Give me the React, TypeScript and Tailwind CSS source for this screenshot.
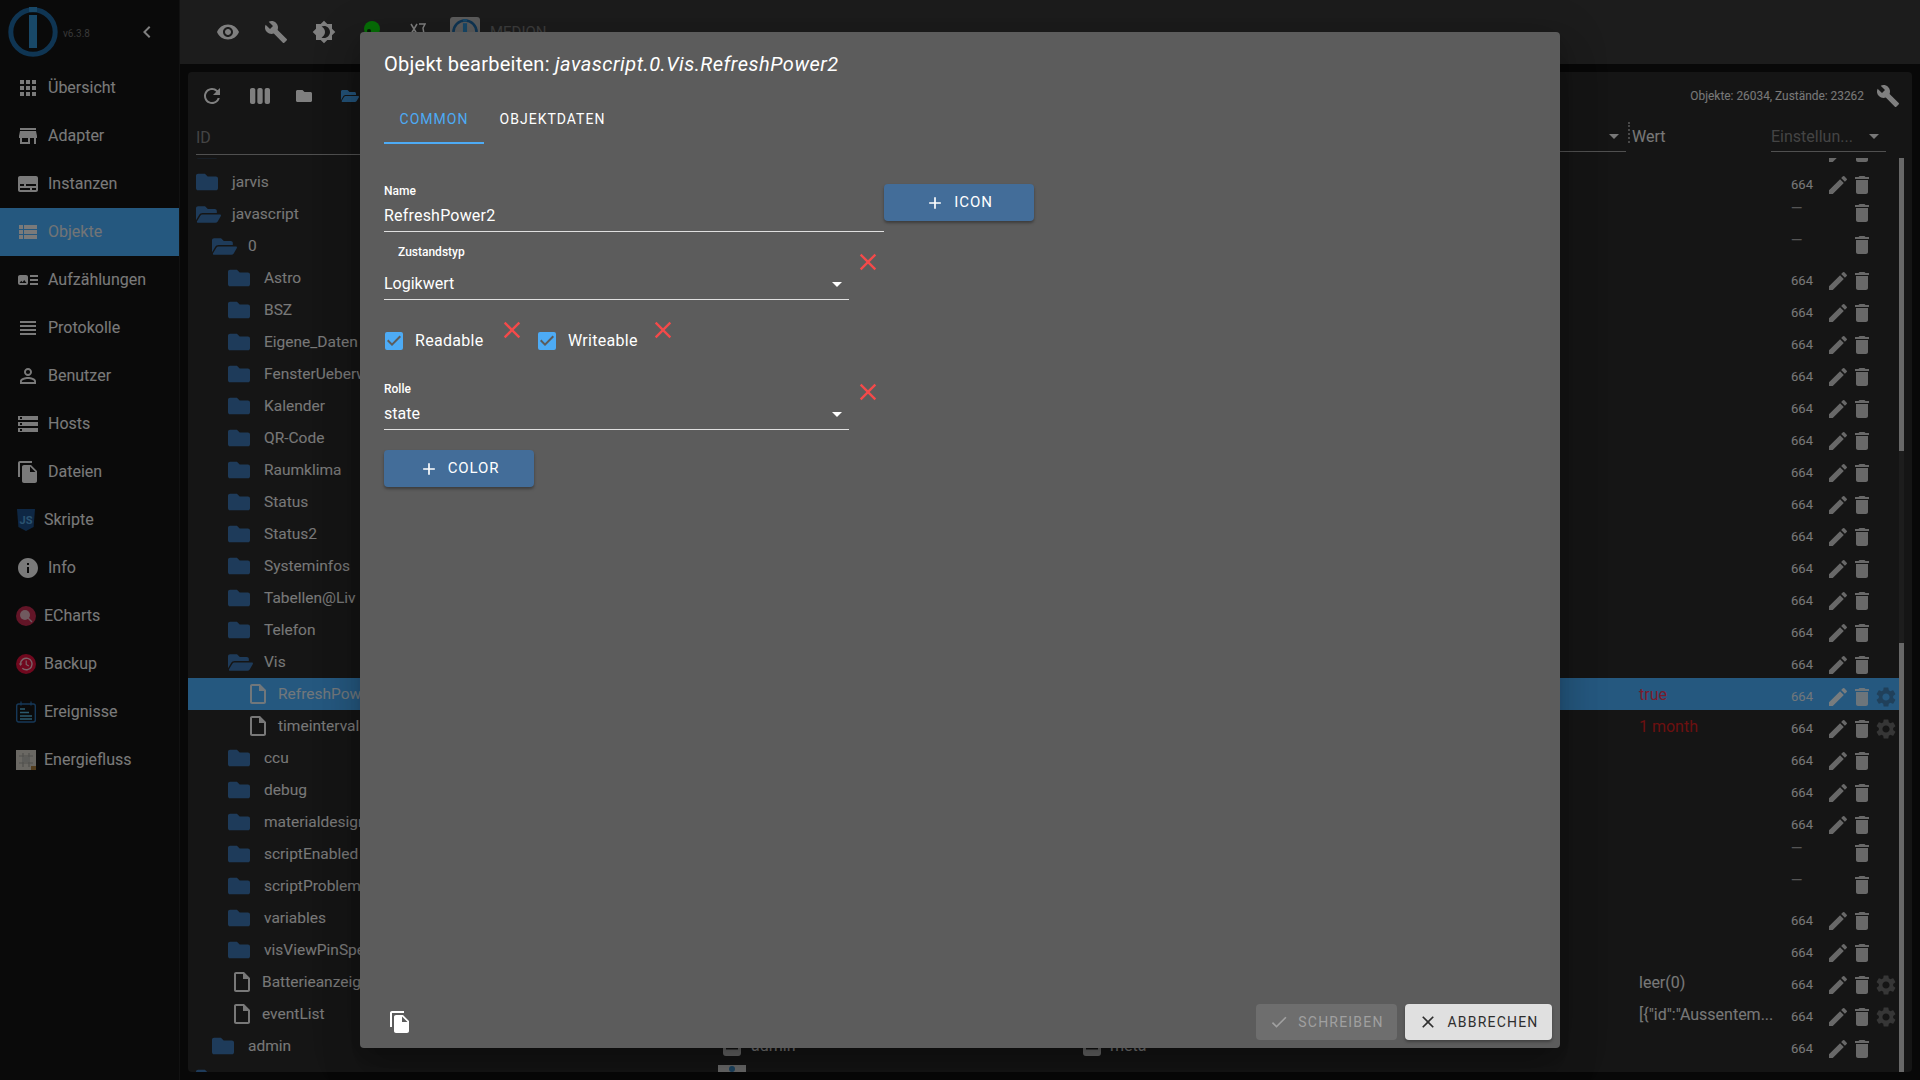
import React from "react";
import {
  MdApps, MdStore, MdSubtitles, MdViewList, MdArtTrack, MdViewHeadline, MdPersonOutline, MdStorage,
  MdFileCopy, MdInfo, MdVisibility, MdBuild, MdBrightness4, MdRefresh, MdViewWeek, MdEdit, MdDelete,
  MdSettings, MdOutlineInsertDriveFile, MdAdd, MdClose, MdCheck, MdCheckBox, MdChevronLeft, MdArrowDropDown,
} from "react-icons/md";
import { FaFolder, FaFolderOpen } from "react-icons/fa";

function Logo({ size }: { size: number }) {
  return (
    <svg width={size} height={size} viewBox="0 0 50 50">
      <circle cx="25" cy="25" r="22.2" fill="none" stroke="#1f6aa6" strokeWidth="5" />
      <rect x="21" y="0" width="8" height="5" fill="#3190d0" />
      <rect x="21" y="8" width="8" height="33" fill="#3190d0" />
    </svg>
  );
}

function JsIcon() {
  return (
    <svg width="20" height="22" viewBox="0 0 20 22">
      <path d="M1 0h18l-1.4 18L10 22l-7.6-4z" fill="#1c4f88" />
      <text x="10" y="15" textAnchor="middle" fontSize="11" fontWeight="700" fontFamily="Roboto, sans-serif" fill="#56a6e0">JS</text>
    </svg>
  );
}

function EChartsIcon() {
  return (
    <svg width="20" height="20" viewBox="0 0 20 20">
      <circle cx="10" cy="10" r="10" fill="#c42a4e" />
      <circle cx="9" cy="9" r="5" fill="#e0b4be" />
      <path d="M12 12l4 4" stroke="#e0b4be" strokeWidth="1.5" />
    </svg>
  );
}

function BackupIcon() {
  return (
    <svg width="20" height="20" viewBox="0 0 20 20">
      <circle cx="10" cy="10" r="10" fill="#e0103c" />
      <path d="M4.5 10a5.8 5.8 0 1 1 1.8 4.2" fill="none" stroke="#f2c5cf" strokeWidth="1.4" />
      <path d="M2.8 9.5h3.6L4.6 12z" fill="#f2c5cf" />
      <path d="M10.2 6.5v4l2.6 1.5" fill="none" stroke="#f2c5cf" strokeWidth="1.2" />
    </svg>
  );
}

function EventsIcon() {
  return (
    <svg width="20" height="22" viewBox="0 0 20 22">
      <rect x="0.7" y="3" width="18.6" height="18" rx="2" fill="none" stroke="#2c70b0" strokeWidth="1.4" />
      <path d="M5 0.5v4M15 0.5v4" stroke="#2c70b0" strokeWidth="1.2" />
      <path d="M4 8h5M4 11.5h9M4 15h12M4 18h12" stroke="#58b4dc" strokeWidth="1.4" />
    </svg>
  );
}

function FlowIcon() {
  return (
    <svg width="20" height="20" viewBox="0 0 20 20">
      <rect width="20" height="20" fill="#d4d0c6" />
      <path d="M3 6h14M3 13h14M7 3v14M13 3v14" stroke="#a0a09a" strokeWidth="1.2" fill="none" />
      <rect x="6" y="7" width="8" height="5" fill="#b8b8b2" />
      <rect x="15" y="16" width="5" height="4" fill="#a87c3c" />
    </svg>
  );
}

type NavItem = { label: string; icon: React.ReactNode; img?: boolean; active?: boolean };

const nav: NavItem[] = [
  { label: "Übersicht", icon: <MdApps size={24} /> },
  { label: "Adapter", icon: <MdStore size={24} /> },
  { label: "Instanzen", icon: <MdSubtitles size={24} /> },
  { label: "Objekte", icon: <MdViewList size={24} />, active: true },
  { label: "Aufzählungen", icon: <MdArtTrack size={24} /> },
  { label: "Protokolle", icon: <MdViewHeadline size={24} /> },
  { label: "Benutzer", icon: <MdPersonOutline size={24} /> },
  { label: "Hosts", icon: <MdStorage size={24} /> },
  { label: "Dateien", icon: <MdFileCopy size={24} /> },
  { label: "Skripte", icon: <JsIcon />, img: true },
  { label: "Info", icon: <MdInfo size={24} /> },
  { label: "ECharts", icon: <EChartsIcon />, img: true },
  { label: "Backup", icon: <BackupIcon />, img: true },
  { label: "Ereignisse", icon: <EventsIcon />, img: true },
  { label: "Energiefluss", icon: <FlowIcon />, img: true },
];

function Sidebar() {
  return (
    <aside className="flex h-full w-[180px] shrink-0 flex-col border-r border-[#242424] bg-[#141414] text-[#f4f4f4]">
      <div className="flex h-16 items-center pl-2">
        <Logo size={50} />
        <span className="ml-[5px] mt-[2px] text-[10px] text-[#707070]">v6.3.8</span>
        <MdChevronLeft size={24} className="ml-[45px] text-[#fff]" />
      </div>
      {nav.map((n) => (
        <div key={n.label} className={`flex h-12 items-center ${n.active ? "bg-[#4ab0fe]" : ""}`}>
          <span className={`ml-4 flex justify-center ${n.img ? "w-5" : "w-6"}`}>{n.icon}</span>
          <span className={`ml-2 text-base ${n.active ? "text-[#e4e8ec]" : ""}`}>{n.label}</span>
        </div>
      ))}
    </aside>
  );
}

function Toolbar() {
  return (
    <header className="flex h-16 shrink-0 items-center bg-[#383838] pl-6 text-white">
      <span className="flex w-12 justify-center"><MdVisibility size={24} /></span>
      <span className="flex w-12 justify-center"><MdBuild size={24} /></span>
      <span className="flex w-12 justify-center"><MdBrightness4 size={24} /></span>
      <span className="flex w-12 justify-center pb-[6px]">
        <svg width="16" height="16" viewBox="0 0 16 16">
          <circle cx="8" cy="8" r="8" fill="#0fdc0f" />
          <circle cx="5" cy="10" r="2" fill="#0a3a0a" />
        </svg>
      </span>
      <span className="flex w-[44px] justify-center pb-[6px]">
        <svg width="16" height="14" viewBox="0 0 16 14" fill="none" stroke="#fff" strokeWidth="1.5">
          <path d="M1 2l6 10M7 2L1 12M9 2h6l-2 4 1 6" />
        </svg>
      </span>
      <span className="ml-[10px] flex h-[30px] w-[30px] items-center justify-center rounded-[3px] bg-[#b8b8b8]">
        <Logo size={26} />
      </span>
      <span className="ml-[10px] text-[15px] text-[#787878]">MEDION</span>
    </header>
  );
}

type Row = {
  name: string;
  level: number;
  kind: "closed" | "open" | "file";
  selected?: boolean;
  dash?: boolean;
  gear?: boolean;
  value?: string;
  valueClass?: string;
  extra?: "meta" | "box";
};

const rows: Row[] = [
  { name: "iqontrol", level: 0, kind: "closed" },
  { name: "jarvis", level: 0, kind: "closed" },
  { name: "javascript", level: 0, kind: "open", dash: true },
  { name: "0", level: 1, kind: "open", dash: true },
  { name: "Astro", level: 2, kind: "closed" },
  { name: "BSZ", level: 2, kind: "closed" },
  { name: "Eigene_Daten", level: 2, kind: "closed" },
  { name: "FensterUeberwachung", level: 2, kind: "closed" },
  { name: "Kalender", level: 2, kind: "closed" },
  { name: "QR-Code", level: 2, kind: "closed" },
  { name: "Raumklima", level: 2, kind: "closed" },
  { name: "Status", level: 2, kind: "closed" },
  { name: "Status2", level: 2, kind: "closed" },
  { name: "Systeminfos", level: 2, kind: "closed" },
  { name: "Tabellen@Liv", level: 2, kind: "closed" },
  { name: "Telefon", level: 2, kind: "closed" },
  { name: "Vis", level: 2, kind: "open" },
  { name: "RefreshPower2", level: 3, kind: "file", selected: true, gear: true, value: "true", valueClass: "text-[#f03858]" },
  { name: "timeinterval", level: 3, kind: "file", gear: true, value: "1 month", valueClass: "text-[#d82020]" },
  { name: "ccu", level: 2, kind: "closed" },
  { name: "debug", level: 2, kind: "closed" },
  { name: "materialdesign", level: 2, kind: "closed" },
  { name: "scriptEnabled", level: 2, kind: "closed", dash: true },
  { name: "scriptProblem", level: 2, kind: "closed", dash: true },
  { name: "variables", level: 2, kind: "closed" },
  { name: "visViewPinSpeed", level: 2, kind: "closed" },
  { name: "Batterieanzeige", level: 2, kind: "file", gear: true, value: "leer(0)" },
  { name: "eventList", level: 2, kind: "file", gear: true, value: '[{"id":"Aussentem...' },
  { name: "admin", level: 1, kind: "closed", extra: "meta" },
  { name: "", level: 0, kind: "closed", extra: "box" },
];

const indent = ["pl-[8px]", "pl-[24px]", "pl-[40px]", "pl-[56px]"];

function MetaIcon() {
  return (
    <svg width="18" height="20" viewBox="0 0 18 20">
      <rect width="18" height="20" rx="3" fill="#d0d0d0" />
      <rect x="3" y="6" width="12" height="2.5" fill="#2a2a2a" />
      <rect x="3" y="11" width="12" height="2.5" fill="#2a2a2a" />
    </svg>
  );
}

function TreeRow({ r }: { r: Row }) {
  return (
    <div className={`flex h-8 items-center ${r.selected ? "bg-[#4ab0fe] text-[#e2eef6]" : "text-[#f0f0f0]"}`}>
      <div className={`flex w-[530px] shrink-0 items-center ${indent[r.level]}`}>
        {r.kind === "closed" && <FaFolder size={22} className="mr-[14px] shrink-0 text-[#3c76b4]" />}
        {r.kind === "open" && <FaFolderOpen size={25} className="mr-[11px] shrink-0 text-[#3c76b4]" />}
        {r.kind === "file" && <MdOutlineInsertDriveFile size={24} className="ml-[2px] mr-2 shrink-0" />}
        <span className="pt-[1px] text-[15.5px] whitespace-nowrap">{r.name}</span>
      </div>
      <div className="flex w-[365px] shrink-0 items-center pl-[5px]">
        {r.extra === "meta" && (
          <div className="flex items-center gap-[10px] text-base">
            <MetaIcon />
            <span>admin</span>
          </div>
        )}
        {r.extra === "box" && (
          <div className="-ml-[5px] mt-[2px] flex h-[28px] w-[28px] justify-center bg-[#d8d8d8] pt-[1px]">
            <span className="h-[6px] w-[6px] rounded-full bg-[#3c8cc8]" />
          </div>
        )}
      </div>
      <div className="flex w-[556px] shrink-0 items-center">
        {r.extra === "meta" && (
          <div className="flex items-center gap-[9px] text-base">
            <MetaIcon />
            <span>meta</span>
          </div>
        )}
      </div>
      <div className={`w-[151px] shrink-0 whitespace-nowrap pt-[1px] text-base ${r.valueClass ?? ""}`}>{r.value}</div>
      <div className={`w-6 shrink-0 whitespace-nowrap ${r.dash ? "pb-[12px] pr-[11px] text-center text-[15px] text-[#aaaaaa]" : "pt-[6px] text-center text-[13px]"}`}>
        {r.dash ? "—" : "664"}
      </div>
      <div className={`ml-3 flex w-6 shrink-0 justify-center pt-[6px] ${r.selected ? "text-[#f0f8fc]" : "text-[#d0d0d0]"}`}>
        {!r.dash && <MdEdit size={24} />}
      </div>
      <div className={`flex w-6 shrink-0 justify-center ${r.dash ? "pb-[2px]" : "pt-[6px]"} ${r.selected ? "text-[#d8eaf6]" : "text-[#d0d0d0]"}`}>
        <MdDelete size={24} />
      </div>
      <div className={`flex w-6 shrink-0 justify-center pt-[6px] ${r.selected ? "text-[#4080b4]" : "text-[#6c6c6c]"}`}>
        {r.gear && <MdSettings size={24} />}
      </div>
    </div>
  );
}

function Panel() {
  return (
    <section className="flex h-full flex-col overflow-hidden rounded-[4px] bg-[#2a2a2a]">
      <div className="flex h-12 shrink-0 items-center text-white">
        <span className="flex w-12 justify-center"><MdRefresh size={24} /></span>
        <span className="flex w-12 justify-center"><MdViewWeek size={24} /></span>
        <span className="flex w-[40px] justify-center"><FaFolder size={16} /></span>
        <span className="ml-[4px] flex w-[44px] justify-center text-[#47a4f0]"><FaFolderOpen size={18} /></span>
        <span className="ml-auto pt-[2px] text-[11.9px] text-[#f0f0f0]">Objekte: 26034, Zustände: 23262</span>
        <span className="ml-3 mr-3 flex w-6 justify-center"><MdBuild size={24} /></span>
      </div>
      <div className="flex h-[38px] shrink-0 items-start pl-2 text-base text-[#f0f0f0]">
        <div className="flex h-[35px] w-[600px] items-center border-b border-[#a0a0a0] pt-[2px] text-[#888888]">ID</div>
        <div className="ml-[604px] flex h-[32px] w-[226px] items-center justify-end border-b border-[#a0a0a0]">
          <MdArrowDropDown size={24} />
        </div>
        <div className="ml-[2px] mt-[2px] h-[21px] w-0 border-l-2 border-dotted border-[#909090]" />
        <div className="ml-[2px] flex h-[32px] w-[139px] items-center pt-[1px]">Wert</div>
        <div className="flex h-[32px] w-[115px] items-center justify-between border-b border-[#a0a0a0] pr-[0px] text-[#888888]">
          <span className="pt-[2px]">Einstellun...</span>
          <MdArrowDropDown size={24} className="text-[#f0f0f0]" />
        </div>
      </div>
      <div className="flex min-h-0 flex-1 pr-2">
        <div className="min-w-0 flex-1 overflow-hidden">
          <div className="-mt-[24px]">
            {rows.map((r, i) => <TreeRow key={i} r={r} />)}
          </div>
        </div>
        <div className="flex w-[5px] shrink-0 flex-col">
          <div className="h-[293px] bg-[#d0d0d0]" />
          <div className="h-[192px] bg-[#3a3a3a]" />
          <div className="flex-1 bg-[#d0d0d0]" />
        </div>
      </div>
    </section>
  );
}

function RedX() {
  return <MdClose size={28} className="-m-[2px] shrink-0 text-[#f44a4a]" />;
}

function BlueButton({ label }: { label: string }) {
  return (
    <button className="flex h-[37px] w-[150px] shrink-0 items-center justify-center gap-[9px] rounded-[4px] bg-[#436d99] text-[15px] tracking-[0.9px] text-white shadow-[0_2px_3px_rgba(0,0,0,0.35)]">
      <MdAdd size={20} />
      {label}
    </button>
  );
}

function Check({ label, textWidth }: { label: string; textWidth: string }) {
  return (
    <div className="mt-[11px] flex items-center">
      <MdCheckBox size={24} className="text-[#4dabf5]" />
      <span className={`ml-[9px] text-base tracking-[0.3px] ${textWidth}`}>{label}</span>
    </div>
  );
}

function Dialog() {
  return (
    <div className="flex h-[1016px] w-[1200px] flex-col rounded-[4px] bg-[#5c5c5c] text-white shadow-[0_11px_15px_-7px_rgba(0,0,0,0.2),0_24px_38px_3px_rgba(0,0,0,0.14),0_9px_46px_8px_rgba(0,0,0,0.12)]">
      <h2 className="h-16 shrink-0 px-6 py-4 text-xl leading-8 font-normal tracking-[0.25px]">
        Objekt bearbeiten: <i className="tracking-[0.5px]">javascript.0.Vis.RefreshPower2</i>
      </h2>
      <div className="flex h-12 shrink-0 px-6 text-sm tracking-[1px]">
        <div className="flex w-[100px] items-center justify-center border-b-2 border-[#4dabf5] text-[#4dabf5]">COMMON</div>
        <div className="flex w-[137px] items-center justify-center pb-[2px]">OBJEKTDATEN</div>
      </div>
      <div className="min-h-0 flex-1 px-6 pt-10">
        <div className="flex items-start">
          <div className="w-[500px] shrink-0 border-b border-[#e0e0e0] pb-1">
            <div className="h-[14px] text-xs leading-[14px] font-medium">Name</div>
            <div className="mt-[5px] flex h-6 items-center pt-[1px] text-base tracking-[0.2px]">RefreshPower2</div>
          </div>
          <BlueButton label="ICON" />
        </div>
        <div className="mt-[13px] flex items-start">
          <div className="w-[465px] shrink-0 border-b border-[#e0e0e0] pb-1">
            <div className="h-[14px] pl-[14px] text-xs leading-[14px] font-medium">Zustandstyp</div>
            <div className="mt-[12px] flex h-6 items-center justify-between text-base">
              <span className="pt-[2px]">Logikwert</span>
              <MdArrowDropDown size={24} className="mt-[1px]" />
            </div>
          </div>
          <span className="ml-[7px] mt-[5px]"><RedX /></span>
        </div>
        <div className="-ml-[2px] mt-[18px] flex items-start">
          <Check label="Readable" textWidth="w-[70px]" />
          <span className="ml-[15px]"><RedX /></span>
          <span className="ml-[11px]"><Check label="Writeable" textWidth="w-[69px]" /></span>
          <span className="ml-[14px]"><RedX /></span>
        </div>
        <div className="mt-[27px] flex items-start">
          <div className="mt-[2px] w-[465px] shrink-0 border-b border-[#e0e0e0] pb-1">
            <div className="h-[14px] text-xs leading-[14px] font-medium">Rolle</div>
            <div className="mt-[5px] flex h-6 items-center justify-between text-base">
              <span className="pt-[2px]">state</span>
              <MdArrowDropDown size={24} className="mt-[1px]" />
            </div>
          </div>
          <span className="ml-[7px]"><RedX /></span>
        </div>
        <div className="mt-5"><BlueButton label="COLOR" /></div>
      </div>
      <div className="flex shrink-0 items-end justify-between pb-2 pl-[28px] pr-2">
        <MdFileCopy size={24} className="mb-[6px]" />
        <div className="flex gap-2">
          <button className="flex h-9 w-[141px] items-center justify-center gap-[9px] rounded-[4px] bg-[#6e6e6e] text-sm tracking-[1.2px] text-[#a0a0a0]">
            <MdCheck size={20} />SCHREIBEN
          </button>
          <button className="flex h-9 w-[147px] items-center justify-center gap-[9px] rounded-[4px] bg-[#e0e0e0] text-sm tracking-[1.2px] text-[#2e2e2e] shadow-[0_2px_3px_rgba(0,0,0,0.3)]">
            <MdClose size={20} />ABBRECHEN
          </button>
        </div>
      </div>
    </div>
  );
}

export default function App() {
  return (
    <div className="relative flex h-screen w-screen overflow-hidden bg-[#101010] font-['Roboto',sans-serif]">
      <Sidebar />
      <div className="flex min-w-0 flex-1 flex-col">
        <Toolbar />
        <main className="min-h-0 flex-1 p-2"><Panel /></main>
      </div>
      <div className="absolute inset-0 flex items-center justify-center bg-black/50">
        <Dialog />
      </div>
    </div>
  );
}
